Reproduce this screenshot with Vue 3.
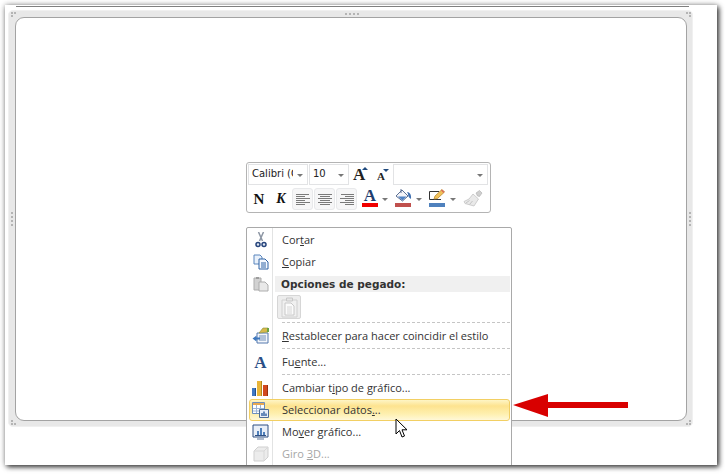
<template>
  <div class="page">
    <div class="slide">
      <div class="top-line"></div>
      <div class="frame">
        <span class="grip grip-top">
          <i v-for="n in 4" :key="n"></i>
        </span>
        <span class="grip grip-left">
          <i v-for="n in 4" :key="n"></i>
        </span>
        <span class="grip grip-right">
          <i v-for="n in 4" :key="n"></i>
        </span>
        <span v-for="c in corners" :key="c" class="corner" :class="c">
          <i></i><i></i><i></i>
        </span>
        <div class="plot"></div>
      </div>

      <div class="mini-bar">
        <div class="mini-row">
          <div class="combo font-combo"><span class="combo-text">Calibri (C</span><b class="caret"></b></div>
          <div class="combo size-combo"><span class="combo-text">10</span><b class="caret"></b></div>
          <div class="grow-btn big">A<b class="tip up"></b></div>
          <div class="grow-btn small">A<b class="tip down"></b></div>
          <div class="combo style-combo"><b class="caret"></b></div>
        </div>
        <div class="mini-row second">
          <span class="fmt bold-n">N</span>
          <span class="fmt bold-k">K</span>
          <span v-for="a in aligns" :key="a.name" class="align-btn">
            <svg width="16" height="14" viewBox="0 0 16 14">
              <path v-for="(l, i) in a.lines" :key="i" :d="l" stroke="#7a7a7a" stroke-width="1" fill="none" />
            </svg>
          </span>
          <span class="color-btn first">
            <span class="font-a">A</span>
            <b class="bar red"></b>
          </span>
          <b class="caret drop first"></b>
          <span class="color-btn">
            <svg width="18" height="15" viewBox="0 0 18 15">
              <path d="M2 7 L8 1 L14 7 L8.500 12 Z" fill="#f4f4f8" stroke="#5a6f93" />
              <path d="M4 7.500 L12.500 7.500 L8.500 11.500 Z" fill="#4f82c4" />
              <path d="M7 0 L7 4" stroke="#5a6f93" />
              <path d="M13 3 C16 3 17.500 6 17 10 C15 9 14 7 14 5 Z" fill="#3f6fb0" />
            </svg>
            <b class="bar brick"></b>
          </span>
          <b class="caret drop"></b>
          <span class="color-btn">
            <svg width="18" height="15" viewBox="0 0 18 15">
              <path d="M1.500 2.500 H11 M1.500 2.500 V10.500 H13" stroke="#333" fill="none" />
              <path d="M6 10 L7 7 L14 .500 L16.500 3 L9.500 9.500 Z" fill="#f2c25a" stroke="#b98a32" stroke-width=".8" />
              <path d="M14 .500 L16.500 3 L15.500 4 L13 1.500 Z" fill="#d9695a" />
            </svg>
            <b class="bar blue"></b>
          </span>
          <b class="caret drop"></b>
          <span class="brush">
            <svg width="20" height="18" viewBox="0 0 20 18">
              <path d="M13 3 L16.500 0.500 L19 3 L16.500 6.500 L14.500 6 Z" fill="#cfcfcf" stroke="#adadad" stroke-width=".6" />
              <path d="M10 4 L15.500 9 L11 16 L2 13.500 L1 11.500 L6 9 Z" fill="#e9e9e9" stroke="#bdbdbd" stroke-width=".7" />
              <path d="M3 13 L6.500 10.500 M6.500 14.500 L9.500 11" stroke="#c4c4c4" />
            </svg>
          </span>
        </div>
      </div>

      <div class="menu">
        <template v-for="item in items" :key="item.key">
          <div v-if="item.type === 'sep'" class="sep"></div>
          <div v-else-if="item.type === 'head'" class="head-row">
            <span class="rail">
              <svg width="18" height="18" viewBox="0 0 18 18">
                <path d="M2 3 H9 V15 H2 Z" fill="#d2d2d2" stroke="#adadad" />
                <path d="M4 2 H7 V4 H4 Z" fill="#9c9c9c" />
                <path d="M7 7 H13 L16 10 V16 H7 Z" fill="#e9e9e9" stroke="#adadad" />
              </svg>
            </span>
            <span class="head-label">{{ item.label }}</span>
          </div>
          <div v-else-if="item.type === 'paste'" class="paste-row">
            <span class="rail"></span>
            <span class="paste-btn">
              <svg width="17" height="21" viewBox="0 0 17 21">
                <path d="M1 3 H16 V20 H1 Z" fill="#f0f0f0" stroke="#d0d0d0" />
                <path d="M5.500 1 H11.500 V4 H5.500 Z" fill="#e6e6e6" stroke="#c8c8c8" />
                <path d="M4 6 H10 L13 9 V18 H4 Z" fill="#fbfbfb" stroke="#c8c8c8" />
                <path d="M6 10 H11 M6 12 H11 M6 14 H11 M6 16 H11" stroke="#d6d6d6" />
              </svg>
            </span>
          </div>
          <div v-else class="item" :class="{ hot: item.hot, off: item.off }">
            <span class="rail">
              <svg v-if="item.icon === 'cut'" width="12" height="16" viewBox="0 0 12 16">
                <path d="M3.500 0 L7.500 9 M8.500 0 L4.500 9" stroke="#8d96a4" stroke-width="1.500" />
                <circle cx="3" cy="12.500" r="2" fill="#dfe7f2" stroke="#27457c" stroke-width="1.500" />
                <circle cx="9" cy="12.500" r="2" fill="#dfe7f2" stroke="#27457c" stroke-width="1.500" />
              </svg>
              <svg v-if="item.icon === 'copy'" width="16" height="16" viewBox="0 0 16 16">
                <path d="M1 1 H7 L9 3 V10 H1 Z" fill="#e9f1fb" stroke="#5b86bd" />
                <path d="M6 5 H12 L15 8 V15 H6 Z" fill="#f6faff" stroke="#2f62a5" />
                <path d="M8 9 H13 M8 11 H13 M8 13 H13" stroke="#2f62a5" />
              </svg>
              <svg v-if="item.icon === 'reset'" width="18" height="18" viewBox="0 0 18 18">
                <path d="M5 6 H16 V16 H5 Z" fill="#f3f6fb" stroke="#5579ad" />
                <path d="M7 9 H14 M7 11 H14 M7 13 H14" stroke="#6f8db8" />
                <path d="M7 6 L11 1 L16 1 L16 5 Z" fill="#d8b94c" stroke="#8a8f35" stroke-width=".6" />
                <path d="M15 1 H17 V5 H15 Z" fill="#6aa342" />
                <path d="M0.500 11.500 L4.500 8.500 V10.500 H8 V12.500 H4.500 V14.500 Z" fill="#3f78bd" />
              </svg>
              <span v-if="item.icon === 'font'" class="font-icon">A</span>
              <svg v-if="item.icon === 'chart'" width="17" height="17" viewBox="0 0 17 17">
                <path d="M0 8 H4 V16 H0 Z" fill="#3f78c4" />
                <path d="M5 1 H10 V16 H5 Z" fill="#e8b53a" />
                <path d="M11 5 H16 V16 H11 Z" fill="#d2491f" />
                <path d="M3 8 H4 V16 H3 Z" fill="#234f8c" />
                <path d="M9 1 H10 V16 H9 Z" fill="#b5861b" />
                <path d="M15 5 H16 V16 H15 Z" fill="#98300f" />
              </svg>
              <svg v-if="item.icon === 'data'" width="17" height="16" viewBox="0 0 17 16">
                <path d="M0.500 0.500 H12.500 V11.500 H0.500 Z" fill="#fff" stroke="#6d8fbe" />
                <path d="M1 1 H12 V3 H1 Z" fill="#e9a94f" />
                <path d="M1 6.500 H12 M1 9 H12 M4.500 3 V11 M8.500 3 V11" stroke="#9db5d6" />
                <path d="M7.500 7.500 H16.500 V15.500 H7.500 Z" fill="#e7eef8" stroke="#4d6c97" />
                <path d="M10 14 V11 M12 14 V9.500 M14 14 V11.500" stroke="#2f5f9f" stroke-width="1.400" />
              </svg>
              <svg v-if="item.icon === 'move'" width="17" height="16" viewBox="0 0 17 16">
                <path d="M1 1 H16 V13 H1 Z" fill="#e9eff8" stroke="#2f4f82" />
                <path d="M5 11 V7 H7 V11 Z M8 11 V4 H10 V11 Z M11 11 V8 H13 V11 Z" fill="#4f7fbb" />
                <path d="M3 11.500 H14" stroke="#2f4f82" />
                <path d="M5 15 H12" stroke="#8c9db8" stroke-width="1.400" />
              </svg>
              <svg v-if="item.icon === 'cube'" width="16" height="16" viewBox="0 0 16 16">
                <path d="M1 5 L5 1 H15 V11 L11 15 H1 Z" fill="#ececec" stroke="#cfcfcf" />
                <path d="M1 5 H11 V15 M11 5 L15 1" fill="none" stroke="#d8d8d8" />
              </svg>
            </span>
            <span class="label">{{ item.pre }}<u>{{ item.key_ }}</u>{{ item.post }}</span>
          </div>
        </template>
      </div>

      <svg class="red-arrow" width="118" height="26" viewBox="0 0 118 26">
        <path d="M1 13 L36 2 V10 H116 V16 H36 V25 Z" fill="#d80000" />
      </svg>

      <svg class="pointer" width="14" height="22" viewBox="0 0 14 22">
        <path d="M1 1 L1 16 L4.500 12.500 L7 19 L9.500 18 L7 11.800 L12 11.800 Z" fill="#fff" stroke="#000" stroke-width="1" stroke-linejoin="round" />
      </svg>
    </div>
  </div>
</template>

<script setup>
const corners = ['tl', 'tr', 'bl', 'br']

const aligns = [
  { name: 'left', lines: ['M1 2.500H14', 'M1 4.500H10', 'M1 6.500H15', 'M1 8.500H10', 'M1 10.500H15', 'M1 12.500H10'] },
  { name: 'center', lines: ['M1 2.500H15', 'M3 4.500H13', 'M1 6.500H15', 'M3 8.500H13', 'M1 10.500H15', 'M3 12.500H13'] },
  { name: 'right', lines: ['M2 2.500H15', 'M6 4.500H15', 'M1 6.500H15', 'M6 8.500H15', 'M1 10.500H15', 'M6 12.500H15'] }
]

const items = [
  { key: 'cut', icon: 'cut', pre: 'Cor', key_: 't', post: 'ar' },
  { key: 'copy', icon: 'copy', pre: '', key_: 'C', post: 'opiar' },
  { key: 'head', type: 'head', label: 'Opciones de pegado:' },
  { key: 'paste', type: 'paste' },
  { key: 's1', type: 'sep' },
  { key: 'reset', icon: 'reset', pre: '', key_: 'R', post: 'establecer para hacer coincidir el estilo' },
  { key: 's2', type: 'sep' },
  { key: 'font', icon: 'font', pre: 'Fu', key_: 'e', post: 'nte...' },
  { key: 's3', type: 'sep' },
  { key: 'chart', icon: 'chart', pre: 'Cambiar t', key_: 'i', post: 'po de gráfico...' },
  { key: 'data', icon: 'data', hot: true, pre: 'Seleccionar datos', key_: '.', post: '..' },
  { key: 'move', icon: 'move', pre: 'Mo', key_: 'v', post: 'er gráfico...' },
  { key: 'cube', icon: 'cube', off: true, pre: 'Giro ', key_: '3', post: 'D...' }
]
</script>

<style>
html,
body {
  margin: 0;
  background: #fff;
  overflow: hidden;
}
</style>

<style scoped>
.page {
  width: 725px;
  height: 475px;
  padding: 5px 0 0 5px;
  box-sizing: border-box;
  overflow: hidden;
  font-family: "Open Sans", sans-serif;
}

.slide {
  position: relative;
  width: 712px;
  height: 460px;
  padding-top: 1px;
  box-sizing: border-box;
  background: #fff;
  overflow: hidden;
}

.page::before {
  content: "";
  position: absolute;
  left: 5px;
  top: 5px;
  width: 712px;
  height: 460px;
  box-shadow: 2px 2px 5px rgba(0, 0, 0, 0.75), 0 0 6px rgba(0, 0, 0, 0.3);
}

.top-line {
  height: 1px;
  margin: 0 28px 0 11px;
  background: #7f7f7f;
}

.frame {
  position: relative;
  width: 685px;
  height: 417px;
  margin: 3px 0 0 3px;
  padding: 6px 5px 5px 6px;
  box-sizing: border-box;
  background: #e8e8e8;
  border: 1px solid #f0f0f0;
  border-radius: 5px;
}

.plot {
  height: 100%;
  box-sizing: border-box;
  background: #fff;
  border: 1px solid #a3a3a3;
  border-radius: 9px;
}

.grip {
  position: absolute;
  display: flex;
  gap: 2px;
}

.grip i {
  width: 2px;
  height: 2px;
  background: #b4b4b4;
}

.grip-top {
  left: 336px;
  top: 2px;
}

.grip-left,
.grip-right {
  flex-direction: column;
  top: 201px;
}

.grip-left {
  left: 2px;
}

.grip-right {
  right: 1px;
}

.corner {
  position: absolute;
  width: 5px;
  height: 5px;
}

.corner i {
  position: absolute;
  width: 2px;
  height: 2px;
  background: #b4b4b4;
}

.corner.tl { left: 2px; top: 1px; }
.corner.tr { right: 1px; top: 1px; }
.corner.bl { left: 2px; bottom: 1px; }
.corner.br { right: 1px; bottom: 1px; }

.corner i:nth-child(1) { left: 0; top: 0; }
.corner i:nth-child(2) { left: 3px; top: 0; }
.corner i:nth-child(3) { left: 0; top: 3px; }
.corner.br i:nth-child(1) { left: 3px; top: 3px; }
.corner.bl i:nth-child(2) { left: 3px; top: 3px; }
.corner.tr i:nth-child(3) { left: 3px; top: 3px; }

.mini-bar {
  position: absolute;
  left: 241px;
  top: 157px;
  width: 245px;
  height: 51px;
  padding: 1px;
  box-sizing: border-box;
  background: #fff;
  border: 1px solid #b4b4b4;
  border-radius: 3px;
}

.mini-row {
  display: flex;
  align-items: center;
  height: 21px;
}

.mini-row.second {
  height: 22px;
  margin-top: 3px;
}

.combo {
  display: flex;
  align-items: center;
  height: 21px;
  box-sizing: border-box;
  background: #fff;
  border: 1px solid #e2e3e5;
  font-family: "DejaVu Sans", sans-serif;
  font-size: 10px;
  color: #222;
}

.combo-text {
  padding-left: 3px;
  padding-bottom: 2px;
  overflow: hidden;
  white-space: nowrap;
  flex: 1;
}

.font-combo {
  width: 60px;
}

.size-combo {
  width: 40px;
  margin-left: 1px;
}

.style-combo {
  width: 95px;
  justify-content: flex-end;
}

.caret {
  display: block;
  width: 0;
  height: 0;
  margin: 1px 4px 0;
  border: 3px solid transparent;
  border-top: 3px solid #777;
  border-bottom: 0;
  flex: none;
}

.grow-btn {
  position: relative;
  box-sizing: border-box;
  color: #222;
  font-family: "Liberation Serif", serif;
  font-weight: bold;
  line-height: 1;
}

.grow-btn.big {
  width: 22px;
  margin-left: 3px;
  padding-left: 1px;
  font-size: 17px;
}

.grow-btn.small {
  width: 18px;
  margin-left: 1px;
  padding-left: 2px;
  padding-top: 3px;
  font-size: 11px;
}

.tip {
  position: absolute;
  width: 0;
  height: 0;
  border: 3px solid transparent;
}

.tip.up {
  left: 10px;
  top: 1px;
  border-top: 0;
  border-bottom: 3px solid #1f497d;
}

.tip.down {
  left: 8px;
  top: 1px;
  border-bottom: 0;
  border-top: 3px solid #1f497d;
}

.fmt {
  font-family: "Liberation Serif", serif;
  font-weight: bold;
  font-size: 13px;
  color: #111;
  text-align: center;
}

.bold-n {
  width: 22px;
  font-size: 15px;
}

.bold-k {
  width: 22px;
  font-style: italic;
  font-size: 14px;
}

.align-btn {
  display: flex;
  align-items: center;
  justify-content: center;
  width: 21px;
  height: 22px;
  margin-right: 1px;
  box-sizing: border-box;
  background: #f6f6f7;
  border: 1px solid #e8e9eb;
  border-radius: 3px;
}

.color-btn {
  position: relative;
  width: 18px;
  height: 20px;
  margin-left: 1px;
}

.color-btn.first {
  margin-left: 3px;
}

.font-a {
  display: block;
  text-align: center;
  font-family: "Liberation Serif", serif;
  font-weight: bold;
  font-size: 17px;
  line-height: 14px;
  color: #1f3d6f;
}

.color-btn svg {
  display: block;
}

.bar {
  position: absolute;
  left: 1px;
  top: 14px;
  width: 16px;
  height: 4px;
}

.bar.red { background: #f00000; }
.bar.brick { background: #c0504d; }
.bar.blue { background: #4f81bd; }

.caret.drop {
  margin: 1px 5px 0 4px;
}

.caret.drop.first {
  margin-left: 3px;
}

.brush {
  margin-left: 2px;
  height: 18px;
}

.brush svg {
  display: block;
}

.menu {
  position: absolute;
  left: 241px;
  top: 222px;
  width: 266px;
  padding: 1px 1px 20px;
  box-sizing: border-box;
  background: #fff;
  border: 1px solid #a9a9a9;
  border-radius: 2px;
  font-size: 11px;
  color: #333;
}

.menu::before {
  content: "";
  position: absolute;
  left: 25px;
  top: 0;
  bottom: 0;
  width: 1px;
  background: #e2e3e3;
}

.item,
.head-row,
.paste-row {
  display: flex;
  align-items: center;
}

.item {
  height: 22px;
  box-sizing: border-box;
  border: 1px solid transparent;
  border-radius: 3px;
}

.item .rail {
  margin-left: -1px;
}

.item.hot {
  position: relative;
  margin: 0 0 0 1px;
  background: linear-gradient(#fef5c6, #fde38f 30%, #fef0b0 70%, #fff8d8);
  border-color: #f2cf63;
}

.item.hot .rail {
  margin-left: -2px;
}

.item.off .label {
  color: #a6a6a6;
}

.rail {
  display: flex;
  align-items: center;
  justify-content: center;
  width: 25px;
  flex: none;
}

.label {
  margin-left: 9px;
  padding-bottom: 2px;
  white-space: nowrap;
}

.head-row {
  height: 16px;
  margin: 3px 0;
}

.head-label {
  flex: 1;
  margin-left: 2px;
  padding-left: 6px;
  line-height: 16px;
  background: #f0f0f0;
  font-family: "DejaVu Sans", sans-serif;
  font-weight: bold;
  color: #333;
  font-size: 10.500px;
}

.paste-row {
  height: 24px;
  margin-bottom: 3px;
}

.paste-btn {
  display: flex;
  align-items: center;
  justify-content: center;
  width: 24px;
  height: 24px;
  margin-left: 4px;
  box-sizing: border-box;
  background: #ededed;
  border: 1px solid #d6d6d6;
  border-radius: 2px;
}

.sep {
  height: 0;
  margin: 1px 0 2px 34px;
  border-top: 1px dashed #c5c5c5;
}

.font-icon {
  font-family: "Liberation Serif", serif;
  font-weight: bold;
  font-size: 17px;
  line-height: 17px;
  color: #2b4f86;
}

.red-arrow {
  position: absolute;
  left: 507px;
  top: 387px;
}

.pointer {
  position: absolute;
  left: 390px;
  top: 413px;
}
</style>
